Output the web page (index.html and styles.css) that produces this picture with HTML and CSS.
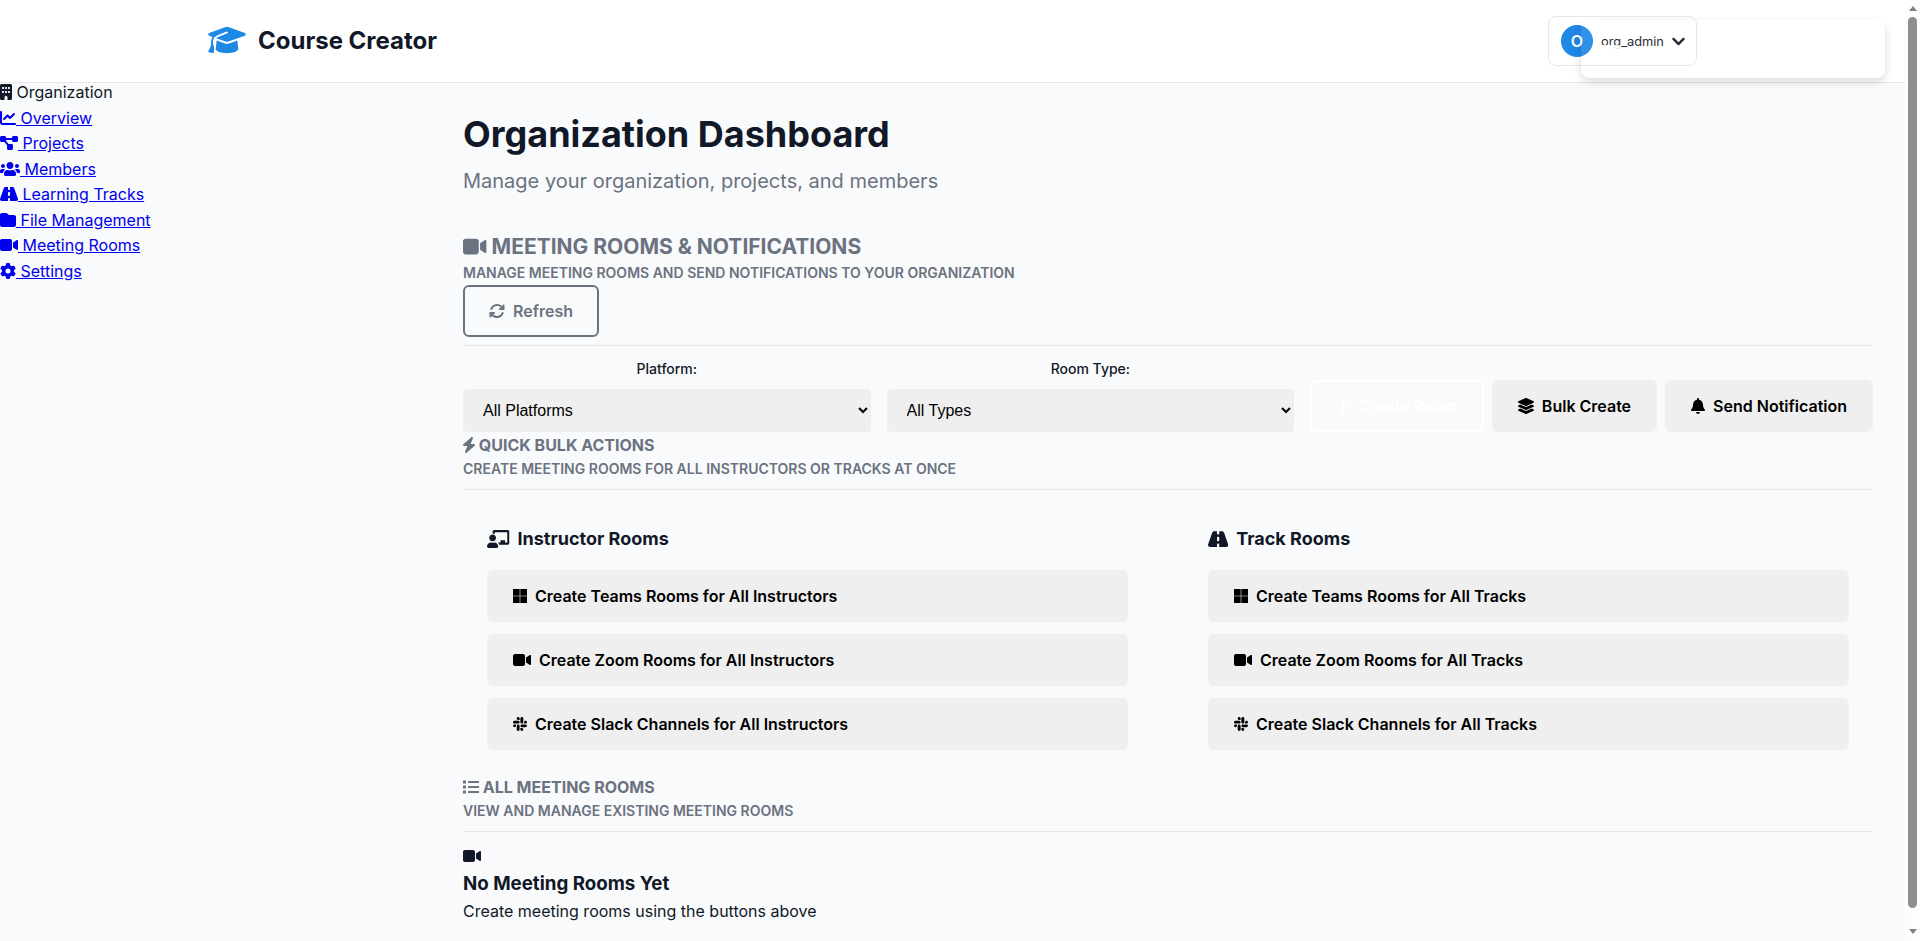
FILE: index.html
```html
<!DOCTYPE html>
<html lang="en">
<head>
    <meta charset="UTF-8">
    <meta name="viewport" content="width=device-width, initial-scale=1.0">
    <title>Organization Dashboard</title>
    <link rel="stylesheet" href="styles.css">
</head>
<body>

    <!-- Icon sprite -->
    <svg class="sprite" xmlns="http://www.w3.org/2000/svg">
        <symbol id="i-cap" viewBox="0 0 640 512"><path d="M320 32c-8.100 0-16.100 1.400-23.700 4.100L15.800 137.400C6.300 140.900 0 149.900 0 160s6.300 19.100 15.800 22.600l57.900 20.900C57.300 229.300 48 259.800 48 291.900v28.100c0 28.400-10.800 57.700-22.300 80.800c-6.500 13-13.900 25.800-22.500 37.600C0 442.700-.9 448.300 .9 453.400s6 8.900 11.200 10.200l64 16c4.200 1.100 8.700 .3 12.400-2s6.300-6.100 7.100-10.400c8.600-42.800 4.300-81.200-2.100-108.700C90.300 344.300 86 329.800 80 316.500V291.900c0-30.200 10.200-58.700 27.900-81.500c12.900-15.500 29.600-28 49.200-35.700l157-61.700c8.200-3.200 17.500 .8 20.700 9s-.8 17.500-9 20.700l-157 61.700c-12.400 4.900-23.300 12.400-32.200 21.600l159.600 57.600c7.600 2.700 15.600 4.100 23.700 4.100s16.100-1.400 23.700-4.100L624.200 182.600c9.500-3.400 15.800-12.500 15.800-22.600s-6.300-19.100-15.800-22.600L343.700 36.100C336.100 33.400 328.100 32 320 32zM128 408c0 35.300 86 72 192 72s192-36.700 192-72L496.700 262.600 354.500 314c-11.100 4-22.800 6-34.500 6s-23.500-2-34.500-6L143.300 262.600 128 408z"/></symbol>
        <symbol id="i-building" viewBox="0 0 384 512"><path d="M48 0C21.500 0 0 21.500 0 48V464c0 26.500 21.500 48 48 48h96V432c0-26.500 21.500-48 48-48s48 21.500 48 48v80h96c26.500 0 48-21.500 48-48V48c0-26.500-21.500-48-48-48H48zM64 240c0-8.800 7.200-16 16-16h32c8.800 0 16 7.200 16 16v32c0 8.800-7.200 16-16 16H80c-8.800 0-16-7.200-16-16V240zm112-16h32c8.800 0 16 7.200 16 16v32c0 8.800-7.200 16-16 16H176c-8.800 0-16-7.200-16-16V240c0-8.800 7.200-16 16-16zm80 16c0-8.800 7.200-16 16-16h32c8.800 0 16 7.200 16 16v32c0 8.800-7.200 16-16 16H272c-8.800 0-16-7.200-16-16V240zM80 96h32c8.800 0 16 7.200 16 16v32c0 8.800-7.200 16-16 16H80c-8.800 0-16-7.200-16-16V112c0-8.800 7.200-16 16-16zm80 16c0-8.800 7.200-16 16-16h32c8.800 0 16 7.200 16 16v32c0 8.800-7.200 16-16 16H176c-8.800 0-16-7.200-16-16V112zM272 96h32c8.800 0 16 7.200 16 16v32c0 8.800-7.200 16-16 16H272c-8.800 0-16-7.200-16-16V112c0-8.800 7.200-16 16-16z"/></symbol>
        <symbol id="i-chart" viewBox="0 0 512 512"><path d="M64 64c0-17.700-14.300-32-32-32S0 46.300 0 64V400c0 44.200 35.800 80 80 80H480c17.700 0 32-14.300 32-32s-14.300-32-32-32H80c-8.800 0-16-7.200-16-16V64zm406.600 86.600c12.500-12.500 12.500-32.800 0-45.300s-32.800-12.500-45.300 0L320 210.700l-57.400-57.400c-12.500-12.500-32.800-12.500-45.300 0l-112 112c-12.500 12.500-12.500 32.800 0 45.300s32.800 12.500 45.300 0L240 221.300l57.400 57.400c12.500 12.500 32.800 12.500 45.300 0l128-128z"/></symbol>
        <symbol id="i-diagram" viewBox="0 0 576 512"><path d="M0 80C0 53.500 21.500 32 48 32h96c26.500 0 48 21.500 48 48V96H384V80c0-26.500 21.500-48 48-48h96c26.500 0 48 21.500 48 48v96c0 26.500-21.500 48-48 48H432c-26.500 0-48-21.500-48-48V160H192v16c0 1.700-.1 3.400-.3 5L272 288h96c26.500 0 48 21.500 48 48v96c0 26.500-21.500 48-48 48H272c-26.500 0-48-21.500-48-48V336c0-1.700 .1-3.400 .3-5L144 224H48c-26.500 0-48-21.500-48-48V80z"/></symbol>
        <symbol id="i-users" viewBox="0 0 640 512"><path d="M96 224c35.300 0 64-28.700 64-64s-28.700-64-64-64-64 28.700-64 64 28.700 64 64 64zm448 0c35.300 0 64-28.700 64-64s-28.700-64-64-64-64 28.700-64 64 28.700 64 64 64zm32 32h-64c-17.600 0-33.500 7.100-45.100 18.600 40.300 22.100 68.900 62 75.100 109.400h66c17.700 0 32-14.300 32-32v-32c0-35.300-28.700-64-64-64zm-256 0c61.900 0 112-50.100 112-112S381.900 32 320 32 208 82.100 208 144s50.100 112 112 112zm76.800 32h-8.300c-20.800 10-43.900 16-68.500 16s-47.600-6-68.500-16h-8.300C179.600 288 128 339.600 128 403.200V432c0 26.500 21.500 48 48 48h288c26.500 0 48-21.500 48-48v-28.800c0-63.600-51.600-115.200-115.200-115.200zm-223.700-13.400C161.500 263.100 145.600 256 128 256H64c-35.300 0-64 28.700-64 64v32c0 17.700 14.300 32 32 32h65.900c6.300-47.400 34.900-87.300 75.200-109.400z"/></symbol>
        <symbol id="i-road" viewBox="0 0 576 512"><path d="M256 32H181.200c-27.100 0-51.300 17.100-60.300 42.600L3.100 407.200C1.100 413 0 419.200 0 425.400C0 455.500 24.500 480 54.600 480H256V416c0-17.700 14.300-32 32-32s32 14.300 32 32v64H521.400c30.200 0 54.600-24.500 54.600-54.600c0-6.200-1.100-12.400-3.100-18.200L455.100 74.600C446.100 49.100 421.900 32 394.800 32H320V96c0 17.700-14.300 32-32 32s-32-14.300-32-32V32zm64 192v64c0 17.700-14.300 32-32 32s-32-14.300-32-32V224c0-17.700 14.300-32 32-32s32 14.300 32 32z"/></symbol>
        <symbol id="i-folder" viewBox="0 0 512 512"><path d="M64 480H448c35.300 0 64-28.700 64-64V160c0-35.300-28.700-64-64-64H288c-10.100 0-19.600-4.700-25.600-12.800L243.200 57.600C231.100 41.500 212.100 32 192 32H64C28.700 32 0 60.700 0 96V416c0 35.300 28.700 64 64 64z"/></symbol>
        <symbol id="i-video" viewBox="0 0 576 512"><path d="M0 128C0 92.700 28.700 64 64 64H320c35.300 0 64 28.700 64 64V384c0 35.300-28.700 64-64 64H64c-35.300 0-64-28.700-64-64V128zM559.100 99.800c10.400 5.600 16.900 16.400 16.900 28.200V384c0 11.800-6.500 22.600-16.900 28.200s-23 5-32.900-1.600l-96-64L416 337.100V320 192 174.900l14.200-9.500 96-64c9.800-6.500 22.400-7.200 32.900-1.600z"/></symbol>
        <symbol id="i-gear" viewBox="0 0 512 512"><path d="M495.900 166.600c3.200 8.700 .5 18.400-6.400 24.600l-43.300 39.400c1.100 8.300 1.700 16.800 1.700 25.400s-.6 17.100-1.700 25.400l43.300 39.400c6.900 6.200 9.600 15.900 6.400 24.600c-4.400 11.900-9.700 23.300-15.800 34.300l-4.700 8.100c-6.600 11-14 21.400-22.100 31.200c-5.900 7.200-15.700 9.600-24.500 6.800l-55.700-17.700c-13.400 10.300-28.200 18.900-44 25.400l-12.500 57.100c-2 9.100-9 16.300-18.200 17.800c-13.800 2.300-28 3.500-42.500 3.500s-28.700-1.200-42.500-3.500c-9.200-1.500-16.200-8.700-18.200-17.800l-12.500-57.100c-15.800-6.500-30.600-15.100-44-25.400L83.100 425.900c-8.800 2.800-18.600 .3-24.500-6.800c-8.100-9.800-15.500-20.200-22.100-31.200l-4.700-8.100c-6.100-11-11.400-22.400-15.800-34.300c-3.200-8.700-.5-18.400 6.400-24.600l43.300-39.400C64.600 273.100 64 264.600 64 256s.6-17.100 1.700-25.400L22.400 191.200c-6.900-6.200-9.600-15.900-6.400-24.600c4.400-11.900 9.700-23.300 15.800-34.300l4.700-8.100c6.600-11 14-21.400 22.100-31.200c5.900-7.200 15.700-9.600 24.500-6.800l55.700 17.700c13.400-10.300 28.200-18.900 44-25.400l12.500-57.100c2-9.100 9-16.300 18.200-17.800C227.300 1.200 241.500 0 256 0s28.700 1.200 42.500 3.500c9.200 1.500 16.200 8.700 18.200 17.800l12.500 57.100c15.800 6.500 30.600 15.100 44 25.400l55.700-17.700c8.800-2.800 18.600-.3 24.500 6.800c8.100 9.800 15.500 20.200 22.100 31.200l4.700 8.100c6.100 11 11.400 22.400 15.800 34.300zM256 336a80 80 0 1 0 0-160 80 80 0 1 0 0 160z"/></symbol>
        <symbol id="i-sync" viewBox="0 0 512 512"><path d="M105.100 202.600c7.700-21.800 20.200-42.300 37.800-59.800c62.500-62.500 163.800-62.500 226.300 0L386.300 160H352c-17.700 0-32 14.300-32 32s14.300 32 32 32H463.500c0 0 0 0 0 0h.4c17.700 0 32-14.300 32-32V80c0-17.700-14.300-32-32-32s-32 14.300-32 32v35.200L414.400 97.600c-87.500-87.500-229.300-87.500-316.800 0C73.200 122 55.600 150.700 44.800 181.400c-5.900 16.700 2.900 34.900 19.500 40.800s34.900-2.900 40.800-19.500zM39 289.300c-5 1.500-9.800 4.200-13.700 8.200c-4 4-6.700 8.800-8.100 14c-.3 1.200-.6 2.500-.8 3.800c-.3 1.700-.4 3.400-.4 5.100V432c0 17.700 14.300 32 32 32s32-14.300 32-32V396.900l17.600 17.500 0 0c87.500 87.400 229.300 87.400 316.700 0c24.400-24.400 42.100-53.100 52.900-83.700c5.900-16.700-2.900-34.900-19.500-40.800s-34.900 2.900-40.800 19.500c-7.700 21.800-20.200 42.300-37.800 59.800c-62.500 62.500-163.800 62.500-226.300 0l-.1-.1L125.600 352H160c17.700 0 32-14.300 32-32s-14.300-32-32-32H48.400c-1.600 0-3.200 .1-4.800 .3s-3.100 .5-4.600 1z"/></symbol>
        <symbol id="i-plus" viewBox="0 0 448 512"><path d="M256 80c0-17.700-14.300-32-32-32s-32 14.300-32 32V224H48c-17.700 0-32 14.300-32 32s14.300 32 32 32H192V432c0 17.700 14.300 32 32 32s32-14.300 32-32V288H400c17.700 0 32-14.300 32-32s-14.300-32-32-32H256V80z"/></symbol>
        <symbol id="i-layers" viewBox="0 0 512 512"><path d="M12.410 148.020l232.940 105.670c6.800 3.090 14.490 3.090 21.290 0l232.940-105.670c16.550-7.510 16.550-32.520 0-40.030L266.650 2.310a25.607 25.607 0 0 0-21.290 0L12.410 107.980c-16.550 7.510-16.550 32.530 0 40.040zm487.180 88.280l-58.090-26.330-161.640 73.270c-7.560 3.430-15.590 5.170-23.860 5.170s-16.290-1.740-23.860-5.170L70.510 209.970l-58.100 26.330c-16.550 7.500-16.550 32.500 0 40l232.940 105.590c6.800 3.080 14.490 3.080 21.290 0L499.590 276.300c16.550-7.500 16.550-32.500 0-40zm0 127.800l-57.870-26.230-161.860 73.370c-7.560 3.430-15.590 5.170-23.860 5.170s-16.290-1.740-23.860-5.170L70.290 337.870 12.410 364.100c-16.550 7.500-16.550 32.500 0 40l232.940 105.590c6.800 3.080 14.490 3.080 21.290 0L499.590 404.100c16.550-7.500 16.550-32.500 0-40z"/></symbol>
        <symbol id="i-bell" viewBox="0 0 448 512"><path d="M224 512c35.320 0 63.970-28.650 63.970-64H160.030c0 35.350 28.650 64 63.970 64zm215.390-149.710c-19.320-20.760-55.470-51.990-55.470-154.290 0-77.700-54.480-139.900-127.940-155.160V32c0-17.670-14.320-32-31.980-32s-31.980 14.330-31.980 32v20.840C118.560 68.100 64.080 130.300 64.080 208c0 102.300-36.150 133.530-55.470 154.290-6 6.450-8.660 14.160-8.610 21.710.11 16.400 12.980 32 32.100 32h383.800c19.120 0 32-15.600 32.100-32 .05-7.550-2.610-15.270-8.610-21.710z"/></symbol>
        <symbol id="i-bolt" viewBox="32 0 384 512"><path d="M349.400 44.600c5.900-13.700 1.500-29.700-10.600-38.500s-28.600-8-39.900 1.800l-256 224c-10 8.800-13.600 22.900-8.900 35.300S50.700 288 64 288H175.500L98.600 467.400c-5.900 13.700-1.500 29.700 10.600 38.500s28.600 8 39.900-1.800l256-224c10-8.800 13.600-22.900 8.900-35.300s-16.600-20.700-30-20.700H272.500L349.400 44.600z"/></symbol>
        <symbol id="i-teacher" viewBox="0 0 640 512"><path d="M208 352c-2.390 0-4.780.35-7.060 1.090C187.980 357.300 174.350 360 160 360c-14.350 0-27.980-2.700-40.950-6.910-2.280-.74-4.660-1.090-7.050-1.090C49.940 352-.33 402.480 0 464.620.14 490.880 21.730 512 48 512h224c26.270 0 47.860-21.120 48-47.380.33-62.140-49.940-112.620-112-112.620zm-48-32c53.020 0 96-42.980 96-96s-42.980-96-96-96-96 42.980-96 96 42.980 96 96 96zM592 0H208c-26.470 0-48 22.250-48 49.590V96c23.420 0 45.100 6.780 64 17.800V64h352v288h-64v-64H384v64h-76.240c19.100 16.690 33.120 38.730 39.690 64H592c26.470 0 48-22.250 48-49.590V49.590C640 22.250 618.470 0 592 0z"/></symbol>
        <symbol id="i-microsoft" viewBox="0 0 448 512"><path d="M0 32h214.600v214.600H0V32zm233.400 0H448v214.600H233.400V32zM0 265.400h214.600V480H0V265.400zm233.400 0H448V480H233.400V265.400z"/></symbol>
        <symbol id="i-slack" viewBox="0 0 448 512"><path d="M94.120 315.100c0 25.900-21.160 47.060-47.060 47.060S0 341 0 315.100c0-25.900 21.160-47.060 47.060-47.060h47.060v47.060zm23.720 0c0-25.900 21.160-47.060 47.060-47.060s47.060 21.160 47.060 47.060v117.840c0 25.900-21.160 47.060-47.060 47.060s-47.060-21.160-47.060-47.060V315.100zm47.060-188.980c-25.900 0-47.060-21.160-47.060-47.060S139 32 164.900 32s47.060 21.160 47.060 47.060v47.060H164.900zm0 23.720c25.900 0 47.060 21.160 47.060 47.060s-21.160 47.060-47.060 47.060H47.060C21.160 243.960 0 222.800 0 196.900s21.160-47.060 47.060-47.060H164.900zm188.980 47.060c0-25.900 21.160-47.060 47.060-47.060 25.900 0 47.060 21.160 47.060 47.060s-21.160 47.060-47.060 47.060h-47.060V196.900zm-23.720 0c0 25.900-21.160 47.060-47.060 47.060-25.900 0-47.060-21.160-47.060-47.060V79.060c0-25.900 21.160-47.060 47.060-47.060 25.900 0 47.060 21.160 47.060 47.060V196.900zM283.100 385.880c25.900 0 47.060 21.160 47.060 47.060 0 25.900-21.160 47.060-47.060 47.060-25.900 0-47.060-21.160-47.060-47.060v-47.060h47.060zm0-23.720c-25.900 0-47.060-21.160-47.060-47.060 0-25.900 21.160-47.060 47.060-47.060h117.840c25.900 0 47.060 21.160 47.060 47.060 0 25.900-21.160 47.060-47.060 47.060H283.100z"/></symbol>
        <symbol id="i-list" viewBox="0 0 512 512"><path d="M80 368H16a16 16 0 0 0-16 16v64a16 16 0 0 0 16 16h64a16 16 0 0 0 16-16v-64a16 16 0 0 0-16-16zm0-320H16A16 16 0 0 0 0 64v64a16 16 0 0 0 16 16h64a16 16 0 0 0 16-16V64a16 16 0 0 0-16-16zm0 160H16a16 16 0 0 0-16 16v64a16 16 0 0 0 16 16h64a16 16 0 0 0 16-16v-64a16 16 0 0 0-16-16zm416 176H176a16 16 0 0 0-16 16v32a16 16 0 0 0 16 16h320a16 16 0 0 0 16-16v-32a16 16 0 0 0-16-16zm0-320H176a16 16 0 0 0-16 16v32a16 16 0 0 0 16 16h320a16 16 0 0 0 16-16V80a16 16 0 0 0-16-16zm0 160H176a16 16 0 0 0-16 16v32a16 16 0 0 0 16 16h320a16 16 0 0 0 16-16v-32a16 16 0 0 0-16-16z"/></symbol>
        <symbol id="i-chevron" viewBox="0 0 448 512"><path d="M207.029 381.476L12.686 187.132c-9.373-9.373-9.373-24.569 0-33.941l22.667-22.667c9.357-9.357 24.522-9.375 33.901-.04L224 284.505l154.745-154.021c9.379-9.335 24.544-9.317 33.901.04l22.667 22.667c9.373 9.373 9.373 24.569 0 33.941L240.971 381.476c-9.373 9.372-24.569 9.372-33.942 0z"/></symbol>
    </svg>

    <header class="site-header">
        <a class="brand" href="#">
            <svg class="icon brand-icon"><use href="#i-cap"/></svg>
            <span>Course Creator</span>
        </a>
        <div class="user-menu">
            <span class="avatar">O</span>
            <span class="user-name">org_admin</span>
            <svg class="icon user-chevron"><use href="#i-chevron"/></svg>
        </div>
        <div class="user-dropdown"></div>
    </header>

    <div class="layout">
        <nav class="sidebar">
            <div class="nav-title"><svg class="fa w3"><use href="#i-building"/></svg> Organization</div>
            <a href="#"><svg class="fa w4"><use href="#i-chart"/></svg> Overview</a>
            <a href="#"><svg class="fa w45"><use href="#i-diagram"/></svg> Projects</a>
            <a href="#"><svg class="fa w5"><use href="#i-users"/></svg> Members</a>
            <a href="#"><svg class="fa w45"><use href="#i-road"/></svg> Learning Tracks</a>
            <a href="#"><svg class="fa w4"><use href="#i-folder"/></svg> File Management</a>
            <a href="#"><svg class="fa w45"><use href="#i-video"/></svg> Meeting Rooms</a>
            <a href="#"><svg class="fa w4"><use href="#i-gear"/></svg> Settings</a>
        </nav>

        <main class="content">
            <h1>Organization Dashboard</h1>
            <p class="lead">Manage your organization, projects, and members</p>

            <div class="section-head section-head-main">
                <h2><svg class="fa w45"><use href="#i-video"/></svg> Meeting Rooms &amp; Notifications</h2>
                <p>Manage meeting rooms and send notifications to your organization</p>
                <button class="btn btn-outline"><svg class="fa w4"><use href="#i-sync"/></svg>Refresh</button>
            </div>

            <div class="toolbar">
                <div class="filter">
                    <label for="platform">Platform:</label>
                    <select id="platform"><option>All Platforms</option></select>
                </div>
                <div class="filter">
                    <label for="room-type">Room Type:</label>
                    <select id="room-type"><option>All Types</option></select>
                </div>
                <div class="toolbar-actions">
                    <button class="btn btn-ghost"><svg class="fa w35"><use href="#i-plus"/></svg>Create Room</button>
                    <button class="btn btn-grey"><svg class="fa w4"><use href="#i-layers"/></svg>Bulk Create</button>
                    <button class="btn btn-grey"><svg class="fa w35"><use href="#i-bell"/></svg>Send Notification</button>
                </div>
            </div>

            <div class="section-head section-head-quick">
                <h3><svg class="fa w3"><use href="#i-bolt"/></svg> Quick Bulk Actions</h3>
                <p>Create meeting rooms for all instructors or tracks at once</p>
            </div>

            <div class="bulk-grid">
                <div class="bulk-col">
                    <h4><svg class="fa w5"><use href="#i-teacher"/></svg>Instructor Rooms</h4>
                    <button class="btn btn-bulk"><svg class="fa w35"><use href="#i-microsoft"/></svg>Create Teams Rooms for All Instructors</button>
                    <button class="btn btn-bulk"><svg class="fa w45"><use href="#i-video"/></svg>Create Zoom Rooms for All Instructors</button>
                    <button class="btn btn-bulk"><svg class="fa w35"><use href="#i-slack"/></svg>Create Slack Channels for All Instructors</button>
                </div>
                <div class="bulk-col">
                    <h4><svg class="fa w45"><use href="#i-road"/></svg>Track Rooms</h4>
                    <button class="btn btn-bulk"><svg class="fa w35"><use href="#i-microsoft"/></svg>Create Teams Rooms for All Tracks</button>
                    <button class="btn btn-bulk"><svg class="fa w45"><use href="#i-video"/></svg>Create Zoom Rooms for All Tracks</button>
                    <button class="btn btn-bulk"><svg class="fa w35"><use href="#i-slack"/></svg>Create Slack Channels for All Tracks</button>
                </div>
            </div>

            <div class="section-head">
                <h3><svg class="fa w4"><use href="#i-list"/></svg> All Meeting Rooms</h3>
                <p>View and manage existing meeting rooms</p>
            </div>

            <div class="empty-state">
                <svg class="fa w45 empty-icon"><use href="#i-video"/></svg>
                <h3>No Meeting Rooms Yet</h3>
                <p>Create meeting rooms using the buttons above</p>
            </div>
        </main>
    </div>

    <!-- Window scrollbar as it shows in the screenshot -->
    <div class="scrollbar">
        <span class="scroll-up"></span>
        <span class="scroll-thumb"></span>
        <span class="scroll-down"></span>
    </div>

</body>
</html>
```

FILE: styles.css
```css
* {
    box-sizing: border-box;
}
body {
    font-family: Inter, "Liberation Sans", sans-serif;
    margin: 0 15px 0 0;
    color: #111827;
    background-color: #f9fafb;
}
.sprite {
    display: none;
}
.icon {
    display: block;
    fill: currentColor;
}
.fa {
    display: inline-block;
    flex-shrink: 0;
    height: 1em;
    vertical-align: -0.125em;
    fill: currentColor;
}
.w3 { width: 0.75em; }
.w35 { width: 0.875em; }
.w4 { width: 1em; }
.w45 { width: 1.125em; }
.w5 { width: 1.25em; }

/* scrollbar */
.scrollbar {
    position: fixed;
    top: 0;
    right: 0;
    bottom: 0;
    display: flex;
    flex-direction: column;
    align-items: center;
    width: 15px;
    padding: 6px 0 7px;
    background-color: #fdfdfd;
}
.scroll-up,
.scroll-down {
    width: 0;
    height: 0;
    border-left: 4.5px solid transparent;
    border-right: 4.5px solid transparent;
}
.scroll-up {
    border-bottom: 5px solid #808080;
}
.scroll-down {
    border-top: 5px solid #808080;
}
.scroll-thumb {
    width: 9px;
    height: 891px;
    margin: 6px 0 21px;
    border-radius: 5px;
    background-color: #8f8f8f;
}

/* header */
.site-header {
    position: relative;
    display: flex;
    align-items: center;
    justify-content: space-between;
    height: 83px;
    padding: 0 208px;
    background-color: #fff;
    border-bottom: 1px solid #e5e7eb;
}
.brand {
    display: flex;
    align-items: center;
    gap: 12px;
    margin-bottom: 2px;
    font-size: 24px;
    font-weight: 700;
    color: #111827;
    text-decoration: none;
}
.brand-icon {
    width: 38px;
    height: 30px;
    color: #1e88e5;
}
.user-menu {
    display: flex;
    align-items: center;
    gap: 8px;
    width: 149px;
    height: 50px;
    padding: 0 13px 0 12px;
    border: 1px solid #e5e7eb;
    border-radius: 8px;
}
.avatar {
    display: flex;
    align-items: center;
    justify-content: center;
    flex-shrink: 0;
    width: 32px;
    height: 32px;
    border-radius: 50%;
    background-color: #1e88e5;
    color: #fff;
    font-size: 16px;
    font-weight: 600;
}
.user-name {
    font-size: 12.8px;
}
.user-chevron {
    flex-shrink: 0;
    width: 13px;
    height: 15px;
    margin-left: auto;
}
.user-dropdown {
    position: absolute;
    z-index: 10;
    top: 20px;
    right: 20px;
    width: 304px;
    height: 58px;
    border-radius: 8px;
    background-color: rgba(255, 255, 255, 0.08);
    box-shadow: 0 4px 10px rgba(0, 0, 0, 0.14);
}
.user-dropdown::before {
    content: "";
    position: absolute;
    top: 25px;
    left: 20px;
    width: 20px;
    height: 5px;
    background-color: rgba(255, 255, 255, 0.85);
}

/* layout */
.layout {
    display: flex;
}
.sidebar {
    flex: 0 0 431px;
    font-size: 16px;
    line-height: 18px;
}
.sidebar a,
.nav-title {
    display: block;
    margin-bottom: 7.5px;
}
.sidebar a {
    color: #0000ee;
}
.content {
    flex: 1;
    min-width: 0;
    padding: 0 32px 16px;
}
h1 {
    margin: 29px 0 0;
    font-size: 36px;
    line-height: 44px;
    font-weight: 700;
}
.lead {
    margin: 11px 0 0;
    font-size: 20px;
    line-height: 28px;
    color: #6b7280;
}

/* section headings */
.section-head {
    padding-bottom: 10px;
    color: #6b7280;
    text-transform: uppercase;
    border-bottom: 1px solid #e5e7eb;
}
.section-head-main {
    margin-top: 38px;
    padding-bottom: 8px;
}
.section-head-quick {
    margin-top: 2px;
}
.section-head h2 {
    margin: 0;
    font-size: 21px;
    line-height: 28px;
    font-weight: 700;
}
.section-head h3 {
    margin: 0;
    font-size: 16px;
    line-height: 22px;
    font-weight: 700;
}
.section-head p {
    margin: 3px 0 0;
    font-size: 14px;
    line-height: 20px;
    font-weight: 600;
}
.section-head-main p {
    margin-top: 2px;
}

/* buttons */
.btn {
    display: inline-flex;
    align-items: center;
    justify-content: center;
    gap: 8px;
    height: 52px;
    padding: 0 24px;
    font-family: inherit;
    font-size: 16px;
    font-weight: 600;
    border: 2px solid transparent;
    border-radius: 6px;
    cursor: pointer;
}
.btn-outline {
    display: flex;
    width: 136px;
    margin-top: 2px;
    padding: 0;
    color: #6b7280;
    background: transparent;
    border-color: #6b7280;
}
.btn-ghost {
    color: #fff;
    background: transparent;
    border-color: #fff;
}
.btn-grey {
    color: #000;
    background-color: #efefef;
}
.btn-bulk {
    display: flex;
    justify-content: flex-start;
    width: 100%;
    color: #000;
    background-color: #efefef;
}

/* toolbar */
.toolbar {
    display: flex;
    align-items: flex-end;
    gap: 16px;
    margin-top: 14px;
}
.toolbar-actions {
    display: flex;
    gap: 8px;
}
.filter {
    display: flex;
    flex: 1;
    flex-direction: column;
    align-items: center;
}
.filter label {
    margin-bottom: 12px;
    font-size: 14px;
    line-height: 17px;
    font-weight: 500;
}
.filter select {
    width: 100%;
    height: 43px;
    padding: 0 16px;
    border: none;
    border-radius: 4px;
    background-color: #efefef;
    font-family: "Liberation Sans", Arial, sans-serif;
    font-size: 16px;
    color: #000;
}

/* bulk actions */
.bulk-grid {
    display: grid;
    grid-template-columns: 1fr 1fr;
    gap: 80px;
    padding: 35px 24px 26px;
}
.bulk-col h4 {
    display: flex;
    align-items: center;
    gap: 8px;
    margin: 0 0 17px;
    font-size: 18px;
    line-height: 28px;
    font-weight: 700;
}
.btn-bulk + .btn-bulk {
    margin-top: 12px;
}

/* empty state */
.empty-state {
    padding-top: 16px;
}
.empty-icon {
    display: block;
}
.empty-state h3 {
    margin: 6px 0 0;
    font-size: 18.72px;
    line-height: 28px;
    font-weight: 700;
}
.empty-state p {
    margin: 1px 0 0;
    font-size: 16px;
    line-height: 24px;
}
```
